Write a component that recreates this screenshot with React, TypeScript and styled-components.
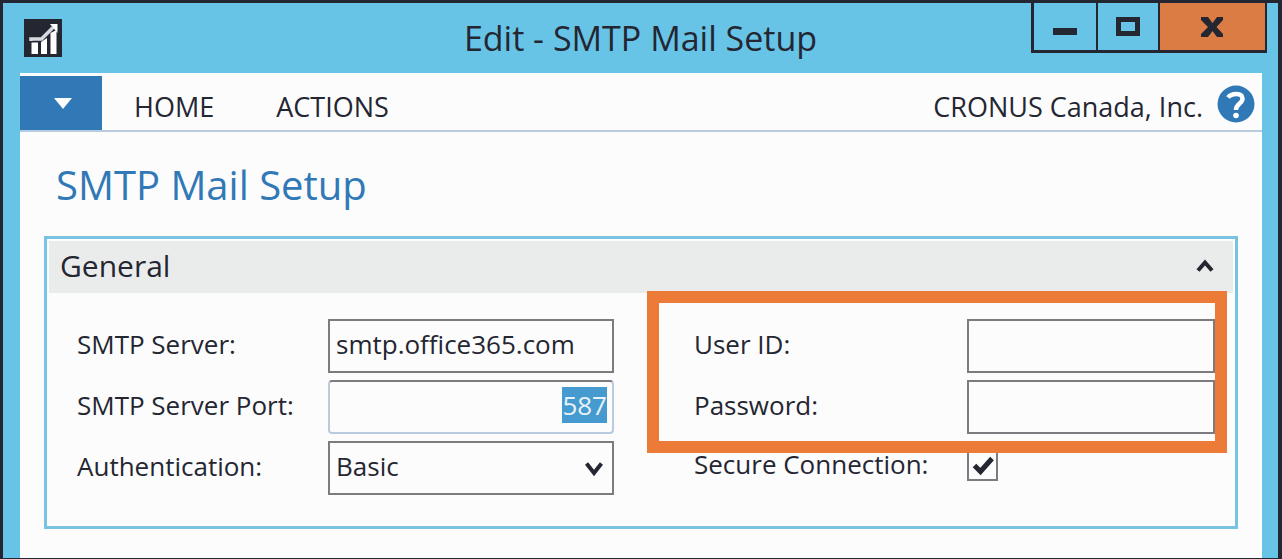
import React, { useEffect, useRef } from "react";
import styled, { createGlobalStyle, css } from "styled-components";

const color = {
  ink: "#242632",
  sky: "#67c4e6",
  blue: "#3179b6",
  orange: "#ed7b38",
  paper: "#fcfcfc",
  line: "#b9cbdf",
  field: "#7d7b80",
  header: "#eaecec",
};

const GlobalStyle = createGlobalStyle`
  *, *::before, *::after { box-sizing: border-box; }
  body {
    margin: 0;
    color: ${color.ink};
    font-family: "Open Sans", "Noto Sans", sans-serif;
    font-size: 26px;
    line-height: 36px;
  }
  button, input, select { font: inherit; color: inherit; margin: 0; }
`;

const Window = styled.div`
  display: flex;
  flex-direction: column;
  min-height: 100vh;
  padding: 0 16px 0 17px;
  background: ${color.sky};
  border: solid ${color.ink};
  border-width: 3px 4px 1px 3px;
`;

const TitleBar = styled.header`
  display: grid;
  grid-template-columns: 1fr auto 1fr;
  align-items: center;
  height: 70px;
  margin-right: -5px;
`;

const AppIcon = styled.svg`
  display: block;
  width: 38px;
  height: 38px;
  margin-left: 4px;
`;

const WindowTitle = styled.div`
  padding-right: 6px;
  font-size: 34px;
  line-height: 44px;
  white-space: nowrap;
`;

const WindowControls = styled.div`
  display: flex;
  align-self: start;
  justify-self: end;
  border: solid ${color.ink};
  border-width: 0 2px 3px 3px;
`;

const ControlButton = styled.button<{ $close?: boolean }>`
  display: flex;
  align-items: center;
  justify-content: center;
  width: ${(p) => (p.$close ? 107 : 62)}px;
  height: 47px;
  padding: 0;
  border: 0;
  background: ${(p) => (p.$close ? "#dc7c45" : "transparent")};
  & + & { border-left: 2px solid ${color.ink}; }
`;

const Content = styled.div`
  flex: 1;
  background: ${color.paper};
`;

const Ribbon = styled.nav`
  display: flex;
  align-items: center;
  height: 59px;
  padding-right: 7px;
  border-bottom: 2px solid ${color.line};
  font-size: 27px;
`;

const FileMenu = styled.button`
  align-self: end;
  display: flex;
  align-items: center;
  justify-content: center;
  width: 82px;
  height: 54px;
  padding: 0 0 0 4px;
  border: 0;
  background: ${color.blue};
`;

const Tab = styled.button`
  padding: 10px 0 0;
  margin-left: 32px;
  border: 0;
  background: none;
  & + & { margin-left: 62px; }
`;

const Company = styled.span`
  margin-left: auto;
  padding-top: 10px;
`;

const HelpButton = styled.button`
  display: flex;
  margin-left: 14px;
  padding: 4px 0 0;
  border: 0;
  background: none;
`;

const Main = styled.main`
  padding: 25px 24px 29px;
`;

const PageTitle = styled.h1`
  margin: 0 0 23px 12px;
  color: ${color.blue};
  font-size: 40px;
  font-weight: 400;
  line-height: 56px;
`;

const Group = styled.section`
  padding: 2px 2px 31px;
  border: 3px solid #79c3e2;
`;

const GroupHeader = styled.div`
  display: flex;
  align-items: center;
  justify-content: space-between;
  height: 52px;
  padding: 0 19px 2px 11px;
  background: ${color.header};
`;

const GroupTitle = styled.h2`
  margin: 0;
  font-size: 30px;
  font-weight: 400;
  line-height: 44px;
`;

const CollapseButton = styled.button`
  display: flex;
  padding: 0;
  border: 0;
  background: none;
`;

const Form = styled.form`
  display: grid;
  grid-template-columns: minmax(0, 537fr) minmax(0, 521fr);
  column-gap: 80px;
  padding: 26px 18px 0 28px;
`;

const Column = styled.div`
  display: flex;
  flex-direction: column;
  gap: 7px;
`;

const Row = styled.div<{ $compact?: boolean }>`
  display: flex;
  align-items: center;
  height: ${(p) => (p.$compact ? 49 : 54)}px;
`;

const Label = styled.label<{ $wide?: boolean }>`
  flex: none;
  width: ${(p) => (p.$wide ? 273 : 251)}px;
  padding-bottom: 4px;
  white-space: nowrap;
`;

const fieldBox = css`
  flex: 1;
  min-width: 0;
  width: 100%;
  height: 54px;
  padding: 0 6px 4px;
  border: 2px solid ${color.field};
  border-radius: 0;
  background: ${color.paper};
  outline: 0;
`;

const TextField = styled.input`
  ${fieldBox}
`;

const PortField = styled.input`
  ${fieldBox}
  padding-right: 5px;
  border-color: ${color.field} ${color.line} ${color.line};
  border-radius: 4px;
  text-align: right;
  &::selection { background: #459bcf; color: #e9f2f8; }
`;

const SelectWrap = styled.div`
  position: relative;
  flex: 1;
  min-width: 0;
`;

const Select = styled.select`
  ${fieldBox}
  display: block;
  appearance: none;
`;

const SelectArrow = styled.svg`
  position: absolute;
  right: 11px;
  top: 20px;
  pointer-events: none;
`;

const CheckWrap = styled.span`
  position: relative;
  display: flex;
`;

const Checkbox = styled.input`
  width: 31px;
  height: 31px;
  appearance: none;
  border: 2px solid ${color.field};
  background: ${color.paper};
  &:not(:checked) + svg { display: none; }
`;

const CheckMark = styled.svg`
  position: absolute;
  left: 5px;
  top: 6px;
  pointer-events: none;
`;

const Highlighted = styled(Column)`
  position: relative;
  z-index: 1;
`;

const Callout = styled.div`
  position: absolute;
  inset: -28px -12px -19px -47px;
  border: 12px solid ${color.orange};
  pointer-events: none;
`;

export default function App() {
  const port = useRef<HTMLInputElement>(null);

  useEffect(() => {
    port.current?.focus();
    port.current?.select();
  }, []);

  return (
    <>
      <GlobalStyle />
      <Window>
        <TitleBar>
          <AppIcon viewBox="0 0 38 38" aria-hidden="true">
            <rect width="38" height="38" fill={color.ink} />
            <path d="M7.500 23.500h6.500V35H7.500zM17 23l6-4v16h-6zM26.500 14l6-3v24h-6z" fill="#fff" />
            <path d="M7 22v-2h10.500L29 8.500" fill="none" stroke="#d5dae0" strokeWidth="3.500" />
            <path d="M26 5h7.500v9z" fill="#fff" />
          </AppIcon>
          <WindowTitle>Edit - SMTP Mail Setup</WindowTitle>
          <WindowControls>
            <ControlButton aria-label="Minimize">
              <svg width="24" height="24" viewBox="0 0 24 24">
                <path d="M0 13h24v7H0z" fill={color.ink} />
              </svg>
            </ControlButton>
            <ControlButton aria-label="Maximize">
              <svg width="24" height="20" viewBox="0 0 24 20">
                <rect x="2.500" y="2.500" width="19" height="14" fill="none" stroke={color.ink} strokeWidth="5" />
              </svg>
            </ControlButton>
            <ControlButton $close aria-label="Close">
              <svg width="24" height="20" viewBox="0 0 24 20">
                <path d="M0 0h7l4.500 6L16 0h6v3l-6.500 7 6.500 7v3h-6l-4.500-6L7 20H0v-3l7-7-7-7z" fill={color.ink} />
              </svg>
            </ControlButton>
          </WindowControls>
        </TitleBar>

        <Content>
          <Ribbon>
            <FileMenu aria-label="Application menu">
              <svg width="18" height="11" viewBox="0 0 18 11">
                <path d="M0 0h18l-9 11z" fill="#fcfcfc" />
              </svg>
            </FileMenu>
            <Tab>HOME</Tab>
            <Tab>ACTIONS</Tab>
            <Company>CRONUS Canada, Inc.</Company>
            <HelpButton aria-label="Help">
              <svg width="38" height="38" viewBox="0 0 38 38">
                <circle cx="19" cy="19" r="18.500" fill={color.blue} />
                <path
                  d="M11 12.500c3-4 14-5.500 14.500 1 .3 5-6.500 5-6.500 11.500"
                  fill="none"
                  stroke="#fff"
                  strokeWidth="4.500"
                />
                <circle cx="19" cy="30.500" r="2.800" fill="#fff" />
              </svg>
            </HelpButton>
          </Ribbon>

          <Main>
            <PageTitle>SMTP Mail Setup</PageTitle>
            <Group>
              <GroupHeader>
                <GroupTitle>General</GroupTitle>
                <CollapseButton aria-label="Collapse General">
                  <svg width="18" height="14" viewBox="0 0 18 14">
                    <path d="M2 11.500l7-8 7 8" fill="none" stroke={color.ink} strokeWidth="4" />
                  </svg>
                </CollapseButton>
              </GroupHeader>
              <Form>
                <Column>
                  <Row>
                    <Label htmlFor="server">SMTP Server:</Label>
                    <TextField id="server" defaultValue="smtp.office365.com" spellCheck={false} />
                  </Row>
                  <Row>
                    <Label htmlFor="port">SMTP Server Port:</Label>
                    <PortField id="port" ref={port} defaultValue="587" />
                  </Row>
                  <Row>
                    <Label htmlFor="auth">Authentication:</Label>
                    <SelectWrap>
                      <Select id="auth" defaultValue="Basic">
                        <option>Anonymous</option>
                        <option>NTLM</option>
                        <option>Basic</option>
                      </Select>
                      <SelectArrow width="18" height="16" viewBox="0 0 18 16" aria-hidden="true">
                        <path d="M1.500 2.500L9 12l7.500-9.500" fill="none" stroke={color.ink} strokeWidth="4" />
                      </SelectArrow>
                    </SelectWrap>
                  </Row>
                </Column>
                <Column>
                  <Highlighted>
                    <Row>
                      <Label $wide htmlFor="user">User ID:</Label>
                      <TextField id="user" />
                    </Row>
                    <Row>
                      <Label $wide htmlFor="password">Password:</Label>
                      <TextField id="password" type="password" />
                    </Row>
                    <Callout />
                  </Highlighted>
                  <Row $compact>
                    <Label $wide htmlFor="secure">Secure Connection:</Label>
                    <CheckWrap>
                      <Checkbox id="secure" type="checkbox" defaultChecked />
                      <CheckMark width="23" height="20" viewBox="0 0 23 20" aria-hidden="true">
                        <path d="M2.500 9.500l6 6L20 2.500" fill="none" stroke={color.ink} strokeWidth="5" />
                      </CheckMark>
                    </CheckWrap>
                  </Row>
                </Column>
              </Form>
            </Group>
          </Main>
        </Content>
      </Window>
    </>
  );
}
